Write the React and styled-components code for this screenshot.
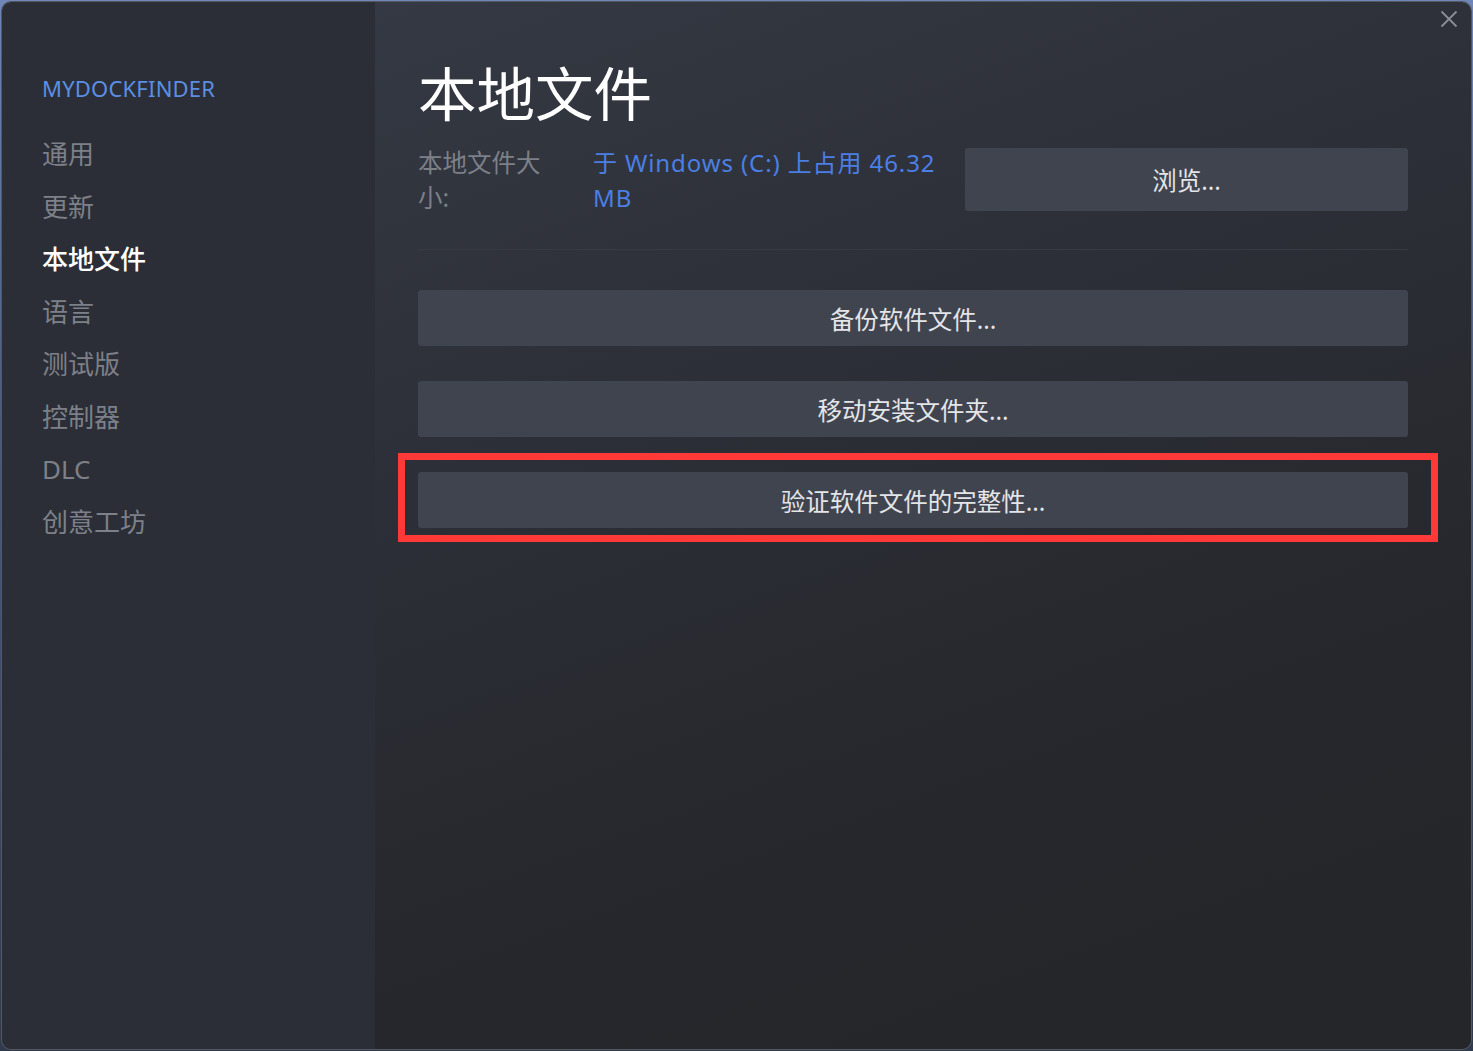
import React from 'react'
import styled, { createGlobalStyle } from 'styled-components';

const GlobalStyle = createGlobalStyle`
    html, body {
        margin: 0;
        padding: 0;
        height: 100%;
    }
    body {
        background: linear-gradient(180deg, #6f86b9 0%, #4a5b7c 40%, #2f3a4d 100%);
        font-family: "Noto Sans", "Noto Sans CJK SC", sans-serif;
        overflow: hidden;
    }
`;

const navItems = ['通用', '更新', '本地文件', '语言', '测试版', '控制器', 'DLC', '创意工坊'];

const actions = [
    { label: '备份软件文件...' },
    { label: '移动安装文件夹...' },
    { label: '验证软件文件的完整性...', marked: true },
];

function App() {
    return (
        <>
            <GlobalStyle />
            <Window>
                <Sidebar>
                    <AppName>MYDOCKFINDER</AppName>
                    <Nav>
                        {navItems.map((item) => (
                            <NavItem key={item} $active={item === '本地文件'}>{item}</NavItem>
                        ))}
                    </Nav>
                </Sidebar>
                <Main>
                    <CloseButton aria-label="close">
                        <svg width="18" height="18" viewBox="0 0 18 18">
                            <path d="M1.5 1.5 L16.5 16.5 M16.5 1.5 L1.5 16.5" stroke="#8b8e95" strokeWidth="1.8" fill="none" />
                        </svg>
                    </CloseButton>
                    <Title>本地文件</Title>
                    <SizeRow>
                        <SizeLabel>本地文件大小:</SizeLabel>
                        <SizeValue>于 Windows (C:) 上占用 46.32 MB</SizeValue>
                        <BrowseButton>浏览...</BrowseButton>
                    </SizeRow>
                    <Divider />
                    <Actions>
                        {actions.map((a) => (
                            <ActionWrap key={a.label} $marked={a.marked}>
                                <ActionButton>{a.label}</ActionButton>
                            </ActionWrap>
                        ))}
                    </Actions>
                </Main>
            </Window>
        </>
    )
}

const Window = styled.div`
    margin: 2px;
    width: 1469px;
    height: 1047px;
    border-radius: 9px;
    overflow: hidden;
    display: flex;
    box-shadow: 0 0 0 1px #55585f;
`;

const Sidebar = styled.div`
    width: 373px;
    flex-shrink: 0;
    background: #2b2e36;
    padding: 71px 0 0 40px;
    box-sizing: border-box;
`;

const AppName = styled.div`
    color: #5a8fe2;
    font-size: 22px;
    letter-spacing: 0.2px;
    line-height: 30px;
    margin-bottom: 25px;
`;

const Nav = styled.div`
    display: flex;
    flex-direction: column;
`;

const NavItem = styled.div`
    font-size: 26px;
    line-height: 52.5px;
    color: ${(p) => (p.$active ? '#ffffff' : '#7d8088')};
    font-weight: ${(p) => (p.$active ? 500 : 400)};
`;

const Main = styled.div`
    position: relative;
    flex: 1;
    background: linear-gradient(160deg, #353943 0%, #2c2f37 35%, #26272c 70%, #252629 100%);
    padding: 50px 63px 0 43px;
    box-sizing: border-box;
`;

const CloseButton = styled.div`
    position: absolute;
    top: 8px;
    right: 13px;
    width: 18px;
    height: 18px;
`;

const Title = styled.h1`
    margin: 0;
    font-size: 58.5px;
    font-weight: 400;
    color: #ffffff;
    line-height: 82px;
`;

const SizeRow = styled.div`
    display: flex;
    align-items: flex-start;
    margin-top: 11px;
`;

const SizeLabel = styled.div`
    width: 127px;
    margin-right: 48px;
    font-size: 24.5px;
    line-height: 35px;
    color: #7d8088;
`;

const SizeValue = styled.div`
    width: 345px;
    margin-right: 27px;
    font-size: 24px;
    letter-spacing: 0.9px;
    line-height: 35px;
    color: #4b7fe5;
`;

const BrowseButton = styled.div`
    flex: 1;
    height: 63px;
    margin-top: 3px;
    background: #40444f;
    border-radius: 3px;
    display: flex;
    align-items: center;
    justify-content: center;
    font-size: 24.5px;
    color: #e4e5e8;
`;

const Divider = styled.div`
    height: 1px;
    background: #373a42;
    margin-top: 34px;
`;

const Actions = styled.div`
    display: flex;
    flex-direction: column;
    gap: 35px;
    margin-top: 40px;
`;

const ActionWrap = styled.div`
    position: relative;
    &::after {
        content: '';
        display: ${(p) => (p.$marked ? 'block' : 'none')};
        position: absolute;
        left: -20px;
        top: -19px;
        right: -30px;
        bottom: -14px;
        border: 7px solid #ff3838;
        pointer-events: none;
    }
`;

const ActionButton = styled.div`
    height: 56px;
    background: #40444f;
    border-radius: 3px;
    display: flex;
    align-items: center;
    justify-content: center;
    font-size: 24.5px;
    color: #e4e5e8;
`;

export default App;
